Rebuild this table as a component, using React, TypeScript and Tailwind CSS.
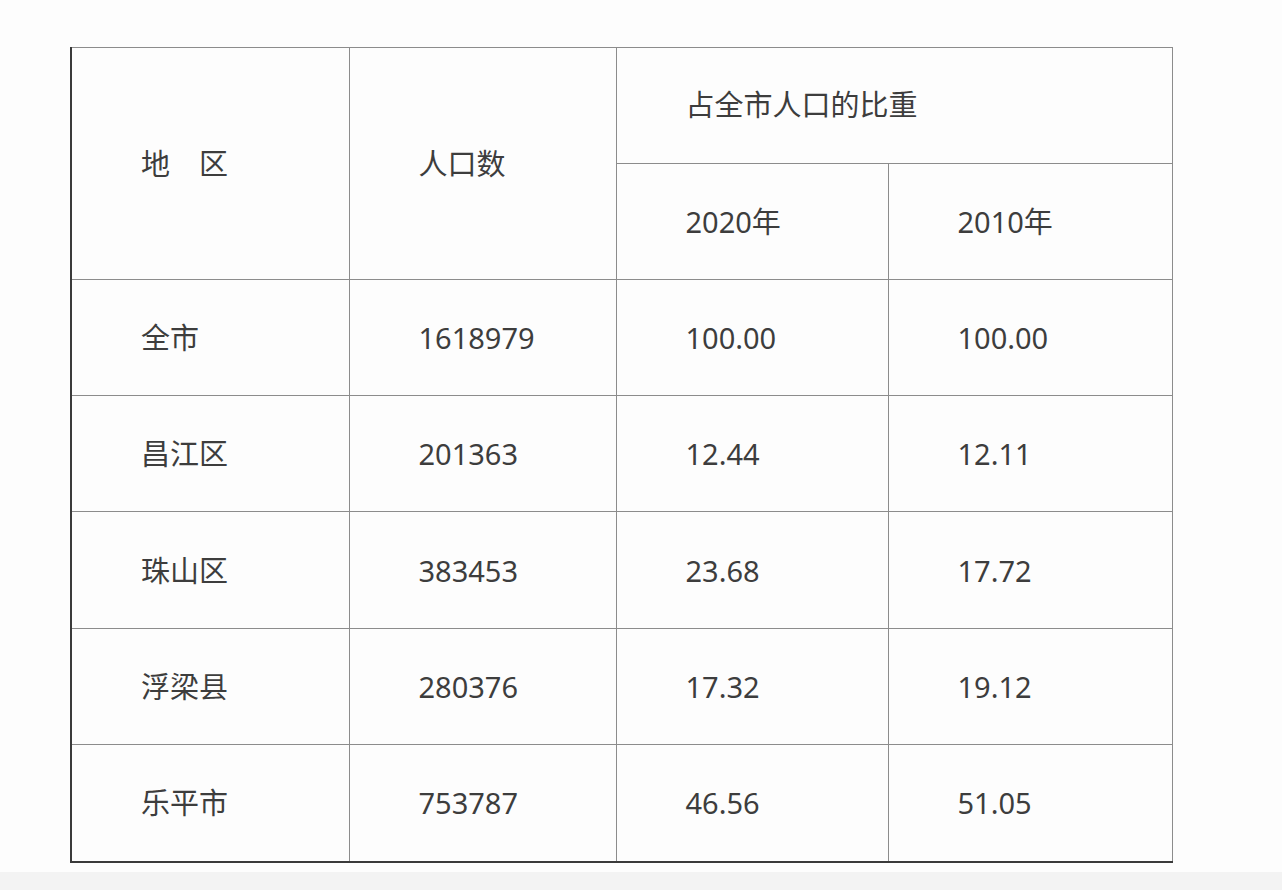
import React from 'react';

interface RegionRow {
  name: string;
  population: string;
  share2020: string;
  share2010: string;
  h: string;
}

const rows: RegionRow[] = [
  { name: '全市', population: '1618979', share2020: '100.00', share2010: '100.00', h: 'h-[116px]' },
  { name: '昌江区', population: '201363', share2020: '12.44', share2010: '12.11', h: 'h-[116px]' },
  { name: '珠山区', population: '383453', share2020: '23.68', share2010: '17.72', h: 'h-[117px]' },
  { name: '浮梁县', population: '280376', share2020: '17.32', share2010: '19.12', h: 'h-[116px]' },
  { name: '乐平市', population: '753787', share2020: '46.56', share2010: '51.05', h: 'h-[117px]' },
];

const cell = 'border border-[#8c8c8c] pl-[69px] align-middle text-left font-normal';

export default function App() {
  return (
    <div
      className="w-[1282px] h-[890px] bg-[#fdfdfd] text-[#3d3d3d] text-[29px] leading-none flex flex-col"
      style={{ fontFamily: '"Noto Sans", "Noto Sans CJK SC", sans-serif' }}
    >
      <div className="flex-1 pt-[47px] pl-[70px]">
        {/* 人口分布表 */}
        <table className="table-fixed border-collapse w-[1101px] border-l-2 border-b-2 border-l-[#3a3a3a] border-b-[#3a3a3a]">
          <colgroup>
            <col className="w-[278px]" />
            <col className="w-[267px]" />
            <col className="w-[272px]" />
            <col className="w-[284px]" />
          </colgroup>
          <thead>
            <tr>
              <th rowSpan={2} className={cell}>地　区</th>
              <th rowSpan={2} className={cell}>人口数</th>
              <th colSpan={2} className={`${cell} h-[116px] pb-[2px]`}>占全市人口的比重</th>
            </tr>
            <tr>
              <th className={`${cell} h-[116px]`}>2020年</th>
              <th className={`${cell} h-[116px]`}>2010年</th>
            </tr>
          </thead>
          <tbody>
            {rows.map((r) => (
              <tr key={r.name}>
                <td className={`${cell} ${r.h}`}>{r.name}</td>
                <td className={cell}>{r.population}</td>
                <td className={cell}>{r.share2020}</td>
                <td className={cell}>{r.share2010}</td>
              </tr>
            ))}
          </tbody>
        </table>
      </div>
      <div className="h-[18px] bg-[#f3f3f3]" />
    </div>
  );
}
